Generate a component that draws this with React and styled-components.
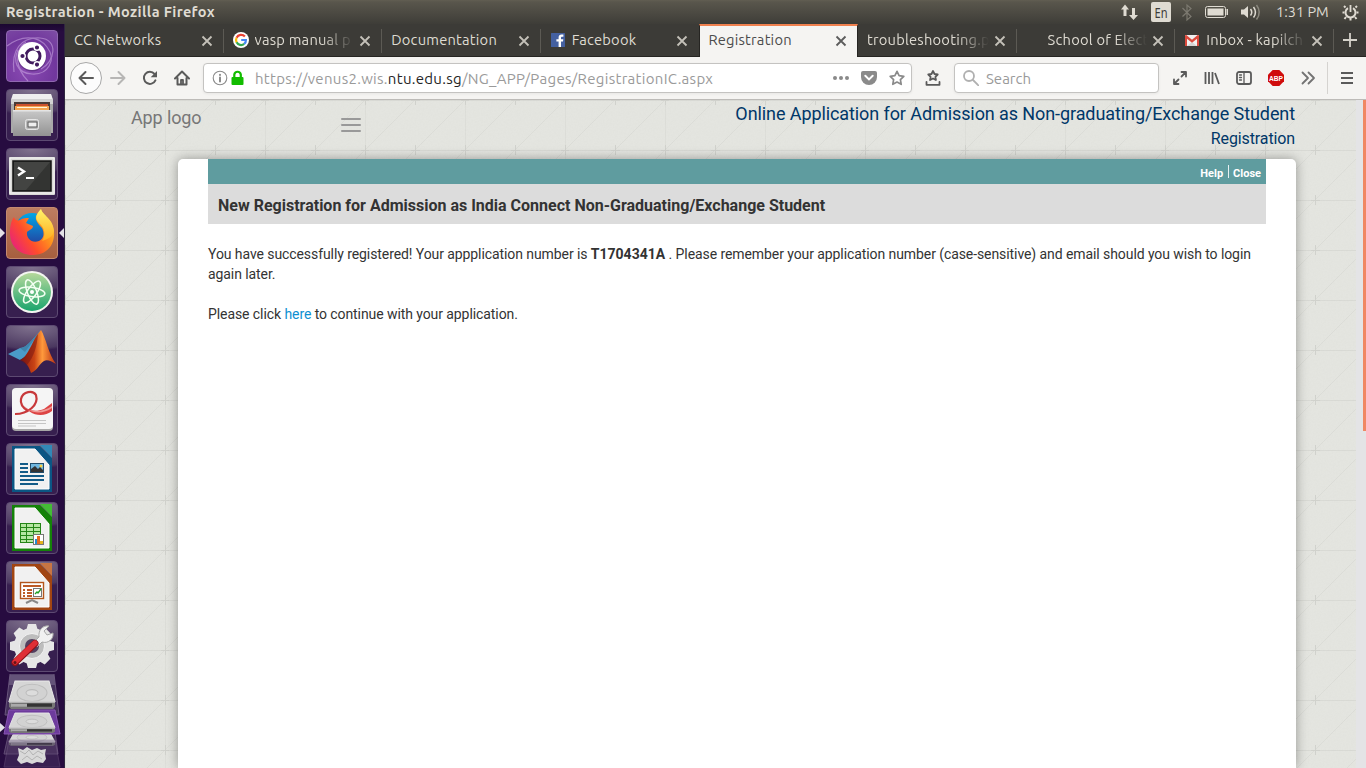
import React from 'react';
import styled, { createGlobalStyle, css } from 'styled-components';

const Global = createGlobalStyle`
  * { box-sizing: border-box; }
  html, body { margin: 0; height: 100%; overflow: hidden; }
  body { font-family: Roboto, "Liberation Sans", sans-serif; }
  svg { display: block; flex: none; }
`;
const uiFont = css`font-family: Ubuntu, "Noto Sans", "Open Sans", sans-serif;`;

const Desktop = styled.div`
  width: 1366px; height: 768px; display: flex; flex-direction: column; overflow: hidden;
`;
const TopPanel = styled.header`
  ${uiFont}
  height: 24px; flex: none; display: flex; align-items: center; justify-content: space-between;
  padding: 0 7px 0 6px; color: #dfdbd2;
  background: linear-gradient(#625e52 0, #59564c 2px, #3e3d38 24px);
`;
const WindowTitle = styled.div`
  font-size: 14.5px; font-weight: 700; line-height: 24px; white-space: nowrap; letter-spacing: 0.38px;
`;
const Indicators = styled.div`display: flex; align-items: center; height: 24px;`;
const Clock = styled.span`font-size: 14.5px; line-height: 24px; width: 53px; margin: 0 13px 0 0; white-space: nowrap; letter-spacing: 0;`;
const Body = styled.div`flex: 1; min-height: 0; display: flex;`;

const Launcher = styled.nav`
  width: 65px; flex: none; display: flex; flex-direction: column; gap: 7px; padding-top: 6px;
  background: linear-gradient(#1b0730 0, #270c40 8px); border-right: 1px solid #2f2640;
`;
const Tile = styled.div`
  position: relative; width: 52px; height: 52px; margin-left: 6px; flex: none;
  border-radius: 4px; border: 1px solid ${p => p.$edge || '#5d4a72'};
  background: ${p => p.$bg || 'radial-gradient(ellipse 60px 25px at 50% 0, #81738f 0, #4b3860 90%, transparent), #371f4f'};
  & > svg { margin: -1px; }
`;
const Marker = styled.span`
  position: absolute; top: 20px; width: 0; height: 0; border: 5px solid transparent;
  ${p => p.$side === 'left' ? 'left: -7px; border-left-color: #e4e1e7; border-right-width: 0;' : 'right: -7px; border-right-color: #e4e1e7; border-left-width: 0;'}
`;
const DiskStack = styled.div`margin-top: -5px; height: 94px;`;

const Browser = styled.main`flex: 1; min-width: 0; display: flex; flex-direction: column;`;
const TabStrip = styled.div`
  ${uiFont}
  height: 33px; flex: none; display: flex; background: #3c3b37; border-bottom: 1px solid #262522;
`;
const Tab = styled.div`
  position: relative; width: 158.6px; height: ${p => p.$active ? 33 : 32}px; flex: none; display: flex; align-items: center;
  padding: 0 8px 0 9px; color: ${p => p.$active ? '#4c4c4c' : '#dfdbd2'};
  ${p => p.$active && 'background: #f5f4f2; border-top: 2px solid #f0814f; border-left: 1px solid #262522; padding-bottom: 3px; padding-left: 8px; margin-bottom: -1px;'}
  border-right: 1px solid ${p => p.$active ? '#262522' : 'transparent'};
  ${p => p.$sep && '&::after { content: ""; position: absolute; right: -1px; top: 5px; width: 1px; height: 24px; background: #5c5a54; }'}
`;
const TabIcon = styled.span`width: 16px; height: 16px; margin-right: 6px; flex: none;`;
const TabLabel = styled.span`
  flex: 1; overflow: hidden; white-space: nowrap; font-size: 14.7px; line-height: 22px; letter-spacing: 0.22px;
  ${p => p.$fade && 'mask-image: linear-gradient(to right, #000 calc(100% - 32px), transparent);'}
`;
const Close = styled.span`margin: 2px 0 0 3px;`;
const NewTab = styled.div`flex: 1; display: flex; align-items: center; justify-content: center;`;

const Toolbar = styled.div`
  ${uiFont}
  height: 43px; flex: none; display: flex; align-items: center; padding-left: 5px;
  background: #f5f4f2; border-bottom: 1px solid #bdbbb8;
`;
const ToolButton = styled.span`
  width: 32px; height: 32px; flex: none; display: flex; align-items: center; justify-content: center;
  ${p => p.$round && 'border: 1px solid #a8a8a8; border-radius: 50%; background: #fcfcfc;'}
`;
const Field = styled.div`
  width: ${p => p.$w}px; height: 30px; margin: 0 5px; flex: none; display: flex; align-items: center;
  background: #fff; border: 1px solid #c4c3c1; border-radius: 4px; box-shadow: 0 1px 3px rgba(0,0,0,.06);
  padding: 0 ${p => p.$pr || 0}px 0 ${p => p.$pl}px;
`;
const Url = styled.span`
  flex: 1; font-size: 15px; color: #9a9a9a; white-space: nowrap; margin-left: ${p => p.$ml || 9}px; letter-spacing: ${p => p.$ls || 0}px;
  b { font-weight: 400; color: #252525; }
`;
const FieldIcons = styled.span`display: flex; gap: 12px; align-items: center;`;
const ToolDivider = styled.span`width: 1px; height: 32px; background: #d5d3d0; margin: 0 3px;`;

const Viewport = styled.div`flex: 1; min-height: 0; display: flex; background: #e4e4e6;`;
const Page = styled.div`
  position: relative; z-index: 0; width: 1291px; flex: none; overflow: hidden; display: flex; flex-direction: column; background: #e4e5e0;
`;
const Texture = styled.svg`position: absolute; inset: 0; z-index: -1;`;
const ScrollTrack = styled.div`flex: 1; display: flex; justify-content: flex-end;`;
const ScrollThumb = styled.div`width: 3px; height: 331px; background: #f08763;`;
const PageHeader = styled.div`height: 59px; flex: none; display: flex; padding: 0 61px 0 66px;`;
const Logo = styled.div`font-size: 18px; line-height: 36px; color: #777; width: 210px; letter-spacing: -0.12px;`;
const Menu = styled.div`
  width: 20px; padding-top: 18px; display: flex; flex-direction: column; gap: 4px;
  i { height: 2px; border-radius: 1px; background: #999; }
`;
const Heading = styled.div`
  margin-left: auto; text-align: right; color: #003768; white-space: nowrap;
`;
const HeadTitle = styled.div`font-size: 18px; line-height: 28px; letter-spacing: -0.09px;`;
const HeadSub = styled.div`font-size: 16px; line-height: 22px; letter-spacing: -0.12px;`;
const Card = styled.section`
  width: 1118px; flex: 1; margin-left: 113px; padding: 0 30px; background: #fff; border-radius: 5px 5px 0 0;
  box-shadow: 0 0 12px rgba(0,0,0,.35);
`;
const ActionBar = styled.div`
  height: 25px; background: #5f9c9f; display: flex; align-items: center; justify-content: flex-end;
  padding: 3px 5px 0 0; color: #fff; font-size: 11px; font-weight: 700;
  i { width: 1px; height: 13px; background: #fff; opacity: .85; margin: -4px 4px 0 5px; }
`;
const CardTitle = styled.h1`
  margin: 0; height: 40px; padding: 2px 10px 0; background: #dcdcdc; color: #333; font-size: 16px; font-weight: 700; line-height: 40px; white-space: nowrap;
`;
const Message = styled.p`
  margin: 20px 0 0; font-size: 14px; line-height: 20px; color: #333; letter-spacing: -0.08px;
  a { color: #0e90d2; }
  b { letter-spacing: 0; }
`;

const CloseX = ({ c = '#c4c1b9' }) => <Close><svg width="16" height="16" viewBox="0 0 16 16"><path d="M3.5 3.5l9 9m0-9l-9 9" stroke={c} strokeWidth="1.8" /></svg></Close>;
const Ic = ({ children, c = '#5a5a5a', w = 2, s = 16 }) => <svg width={s} height={s} viewBox="0 0 16 16" fill="none" stroke={c} strokeWidth={w} strokeLinecap="round" strokeLinejoin="round">{children}</svg>;
const star = 'M8 1.3l2.1 4.3 4.7.7-3.4 3.3.8 4.7L8 12.1l-4.2 2.2.8-4.7L1.2 6.3l4.7-.7z';

const GoogleIcon = () => <svg width="16" height="16" viewBox="0 0 16 16"><circle cx="8" cy="8" r="8" fill="#fff" /><g fill="none" strokeWidth="2.2"><path d="M11.9 4.6A5 5 0 0 0 3.6 5.8" stroke="#ea4335" /><path d="M3.6 5.8a5 5 0 0 0 0 4.6" stroke="#fbbc05" /><path d="M3.6 10.3a5 5 0 0 0 7.6 1.6" stroke="#34a853" /><path d="M11.2 11.9A4.8 4.8 0 0 0 12.9 8H8.2" stroke="#4285f4" /></g></svg>;
const FacebookIcon = () => <svg width="16" height="16" viewBox="0 0 16 16"><rect x="1" y="1" width="14" height="14" rx=".5" fill="#4460a0" /><path d="M8.6 15V9.6H6.4V7.2h2.2V5.6c0-2 1.1-3.1 3-3.1h1.8v2.2h-1.2c-.9 0-1.2.4-1.2 1.2v1.3h2.3l-.3 2.4h-2V15z" fill="#fff" /></svg>;
const MailIcon = () => <svg width="16" height="16" viewBox="0 0 16 16"><path d="M1 3h14v11H1z" fill="#f1f1f1" /><path d="M3 14l5-4 5 4z" fill="#d5d5d5" /><path d="M1 3.3v10.7h2V6.8l5 4 5-4V14h2V3.3L13.7 3 8 7.7 2.3 3z" fill="#dc4a3d" /></svg>;

const tabs = [
  { label: 'CC Networks', sep: 1 },
  { label: 'vasp manual p', icon: <GoogleIcon />, sep: 1, fade: 1 },
  { label: 'Documentation', sep: 1 },
  { label: 'Facebook', icon: <FacebookIcon /> },
  { label: 'Registration', active: 1 },
  { label: 'troubleshooting.p', sep: 1, fade: 1 },
  { label: 'School of Elect', icon: <></>, sep: 1, fade: 1 },
  { label: 'Inbox - kapilch', icon: <MailIcon />, sep: 1, fade: 1 },
];

const Sv = ({ children }) => <svg width="52" height="52" viewBox="0 0 52 52">{children}</svg>;
const UbuntuLogo = () => <Sv>
  <g fill="none" stroke="#d5b5ea" strokeWidth="1.2" opacity=".5"><path d="M8 42C5 20 15 7 34 8s15 24 1 31" /><path d="M1 16c13-10 30-12 40 1s1 28-15 27S7 30 12 20" /><path d="M22 51C9 38 8 20 20 12" /></g>
  <circle cx="26" cy="27" r="14.4" fill="#30104b" opacity=".35" /><circle cx="26" cy="26" r="14" fill="#fff" />
  <circle cx="27" cy="26" r="7" fill="none" stroke="#411b5e" strokeWidth="3" />
  <g stroke="#fff" strokeWidth="1.4" fill="#411b5e"><circle cx="16.5" cy="26" r="2.8" /><circle cx="31" cy="17.5" r="2.8" /><circle cx="31" cy="34.6" r="2.8" /></g>
</Sv>;
const Files = () => <Sv>
  <path d="M7 5h38l2 6v33H5V11z" fill="#a9a9a9" /><path d="M7 5h38l2 6H5z" fill="#efefef" /><path d="M5 10h42v5H5z" fill="#d2d2d2" />
  <path d="M8 13h36v9H8z" fill="#4b3a36" /><path d="M10 15h32v2H10z" fill="#cc512c" /><path d="M9 17h34v4H9z" fill="#f3a34f" /><path d="M11 18h30v1H11z" fill="#fff3da" />
  <path d="M7 21h38v26H7z" fill="url(#fl)" /><path d="M7 21h38v1.5H7z" fill="#e4e4e4" />
  <rect x="19.500" y="30.500" width="13" height="10" rx="2" fill="#bbb" stroke="#e6e6e6" /><rect x="22" y="33" width="9" height="5" fill="#eee" stroke="#555" />
  <defs><linearGradient id="fl" x2="0" y2="1"><stop stopColor="#c9c9c9" /><stop offset="1" stopColor="#929292" /></linearGradient></defs>
</Sv>;
const Terminal = () => <Sv>
  <rect x="3" y="9" width="46" height="38" rx="1" fill="#d9d9d6" /><rect x="4" y="10" width="44" height="35" fill="none" stroke="#f5f5f5" />
  <rect x="7" y="13" width="38" height="30" fill="#333432" stroke="#151515" strokeWidth="1.5" /><path d="M8 14h36L20 42H8z" fill="#4a4b49" opacity=".7" />
  <path d="M12 19.500l6 4-6 4" fill="none" stroke="#fff" strokeWidth="2.4" /><path d="M20 30h8" stroke="#fff" strokeWidth="2" />
</Sv>;
const Firefox = () => <Sv>
  <defs>
    <linearGradient id="ff" x1="1" y1=".1" x2="0" y2=".8"><stop stopColor="#ffe63c" /><stop offset=".3" stopColor="#ff9b1c" /><stop offset=".65" stopColor="#ff4c2c" /><stop offset="1" stopColor="#e61f80" /></linearGradient>
    <linearGradient id="fb" x1="0" y1="0" x2="0" y2="1"><stop stopColor="#00a7e8" /><stop offset="1" stopColor="#263b9a" /></linearGradient>
    <linearGradient id="fy" x2="0" y2="1"><stop stopColor="#fff36a" /><stop offset="1" stopColor="#ffab1e" /></linearGradient>
  </defs>
  <circle cx="26" cy="23" r="17" fill="url(#fb)" />
  <path d="M8 10C9 13 11 14 14 13C17 11 20 11 23 11L20 16L27 19C27 22 23 23 21 25C20 31 26 37 33 34C39 31 38 25 36 21C32 17 29 13 30 9L35 2C36 8 44 11 47 20C51 33 44 48 27 48C12 48 4 38 4 26C4 19 5 14 8 10Z" fill="url(#ff)" />
  <path d="M35 2C29 8 29 12 33 16C39 21 40 28 36 34C42 32 47 30 48 24C47 11 37 9 35 2Z" fill="url(#fy)" />
</Sv>;
const Atom = () => <Sv>
  <circle cx="26" cy="26" r="21" fill="#f4f6f1" /><circle cx="26" cy="26" r="19" fill="url(#at)" />
  <defs><linearGradient id="at" x2="0" y2="1"><stop stopColor="#b5d89b" /><stop offset="1" stopColor="#1ba56d" /></linearGradient></defs>
  <g fill="none" stroke="#f3fff2" strokeWidth="1.5"><ellipse cx="26" cy="26" rx="13" ry="4.600" transform="rotate(8 26 26)" /><ellipse cx="26" cy="26" rx="13" ry="4.600" transform="rotate(68 26 26)" /><ellipse cx="26" cy="26" rx="13" ry="4.600" transform="rotate(126 26 26)" /></g><circle cx="26" cy="26" r="2" fill="#fff" />
</Sv>;
const Matlab = () => <Sv>
  <defs><linearGradient id="ml"><stop stopColor="#8c160c" /><stop offset=".4" stopColor="#c94415" /><stop offset=".62" stopColor="#ff9a3c" /><stop offset="1" stopColor="#b72f12" /></linearGradient></defs>
  <path d="M2 29l12-6c5 0 8-4 12-8L35 5c-5 10-8 18-15 26l-6 4z" fill="#4a9bc9" /><path d="M14 23c5 0 8-4 12-8L35 5 19 27z" fill="#3f84ad" />
  <path d="M14 35c8-2 13-22 21-30 5 8 7 23 15 34-5-3-9-5-12-3-5 3-6 9-13 12-2-6-5-12-11-13z" fill="url(#ml)" /><path d="M14 35c8-2 13-20 18-26-1 12-4 23-11 31z" fill="#741411" opacity=".5" />
</Sv>;
const Reader = () => <Sv>
  <rect x="6" y="5" width="41" height="42" rx="4" fill="#a7a7a7" /><rect x="6" y="4" width="41" height="41" rx="4" fill="#f5f5f5" />
  <path d="M9 30C22 30 33 21 30 11c-3-5-13-4-15 4-1 5 2 9 7 12" fill="none" stroke="#c8393b" strokeWidth="2.200" />
  <path d="M16 18c3 8 12 11 22 7l8-6v8c-9 7-24 5-30-9z" fill="#dd4444" /><path d="M22 26c8 2 17 1 24-4v2c-7 5-16 6-24 2z" fill="#f09a96" />
  <path d="M12 36.500h28M12 39.500h28M12 42h18" stroke="#c5c5c5" />
</Sv>;
const Office = ({ color, light, children }) => <Sv>
  <path d="M6 3h26l14 15v31H6z" fill={color} /><path d="M9 6h20l14 16v24H9z" fill="#f1f1f1" stroke="#fff" /><path d="M29 3L46 20v-5L34 3z" fill={color} /><path d="M34 2h12v13z" fill={light} />{children}
</Sv>;
const Writer = () => <Office color="#0b5684" light="#3188b7"><path d="M14 21h8M14 25h8M14 29h8M14 33h24M14 37h24M14 41h18" stroke="#125b88" strokeWidth="2" /><rect x="24.500" y="20.500" width="13" height="9" fill="#6fb6df" stroke="#214c6b" /><circle cx="35" cy="23" r="1.500" fill="#f9d040" /><path d="M25 29v-3l4-3 3 3 2-2 3 3v2z" fill="#333" /></Office>;
const Calc = () => <Office color="#148209" light="#43bd35"><rect x="14" y="21" width="21" height="20" fill="#b5e6a2" /><path d="M14.500 21v20M20.500 21v20M27.500 21v20M34.500 21v20M14 21.500h21M14 25.500h21M14 29.500h21M14 33.500h21M14 37.500h21M14 40.500h21" stroke="#248517" /><rect x="27.500" y="32.500" width="10" height="10" fill="#fff" stroke="#777" /><path d="M29 37h2v5h-2z" fill="#268bd2" /><path d="M31 34h3v8h-3z" fill="#e66a21" /><path d="M34 39h3v3h-3z" fill="#e5b41d" /></Office>;
const Impress = () => <Office color="#a14512" light="#c87543"><rect x="14.500" y="21.500" width="23" height="16" fill="#fff" stroke="#b3551c" strokeWidth="1.400" /><path d="M17 25h18M17 29h2M17 32h2M17 35h2M21 29h5M21 32h5M21 35h5" stroke="#bd5b27" strokeWidth="2" /><rect x="27.500" y="27.500" width="8" height="8" fill="#fff" stroke="#777" /><path d="M29 33l2-2 1 1 3-4" fill="none" stroke="#1fa025" strokeWidth="1.300" /><path d="M20 42l6-3 6 3" fill="none" stroke="#888" strokeWidth="2" /></Office>;
const Settings = () => <Sv>
  <g fill="#e6e6e6">{[0, 45, 90, 135].map(a => <path key={a} d="M22 4h8l2 7v30l-2 7h-8l-2-7V11z" transform={`rotate(${a} 26 26)`} />)}<circle cx="26" cy="26" r="18" /></g><circle cx="26" cy="26" r="12.500" fill="#bdbdbd" stroke="#f4f4f4" /><circle cx="26" cy="26" r="7" fill="#53405f" />
  <path d="M28 22l5-5c-1-7 4-12 10-11l-5 5 3 4 6-2c1 6-5 11-11 9l-5 5z" fill="#f1f1f1" stroke="#a9a9a9" />
  <path d="M9 42.500L29 23.500" stroke="#8c1017" strokeWidth="7" strokeLinecap="round" /><path d="M9 42L29 23" stroke="#df2e35" strokeWidth="5.400" strokeLinecap="round" /><circle cx="9" cy="42.500" r="1.500" fill="#641117" />
</Sv>;
const Disk = ({ y, h = 24 }) => <g transform={`translate(0 ${y}) scale(1 ${h / 26})`}><path d="M15 0h34l6 19H9z" fill="#d6d6d6" stroke="#e9e9e9" /><ellipse cx="32" cy="11" rx="15" ry="8" fill="#d2d2d2" stroke="#bdbdbd" /><ellipse cx="32" cy="11" rx="6" ry="3" fill="#dcdcdc" stroke="#bbb" /><path d="M9 19h46v5l-2 2H11l-2-2z" fill="#777" /><path d="M12 21h40v3H12z" fill="#333" /><path d="M9 19h46v1H9z" fill="#eee" /><path d="M11 21h16v3H11z" fill="#aaa" /></g>;
const Stack = () => <svg width="64" height="94" viewBox="0 0 64 94">
  <path d="M10 0h44l5 41H5z" fill="#44305b" stroke="#69567c" /><path d="M10 1h44l1 10H9z" fill="#77678a" opacity=".65" /><Disk y="7" h={28} />
  <path d="M9 58h46l3 22H4z" fill="#422a58" stroke="#614b74" /><Disk y="57" h={15} />
  <path d="M9 36h46l5 24H4z" fill="#6d3b9c" stroke="#8854b2" /><Disk y="39" h={20} />
  <path d="M9 66h46l5 27H4z" fill="#56406b" opacity=".4" stroke="#80688f" />
  <path d="M18 74l5 2 4-3 5 3 5-2 4 2 5-1-1 5 1 5-3 4-6-1-5 2-5-2-6 2-4-4 2-5z" fill="#d9d9d9" /><path d="M20 77l5 3 4-4 4 5 5-4 5 3M22 86l5-4 5 4 5-4 5 3" fill="none" stroke="#b4b4b4" />
  <path d="M0 49l5 4.500-5 4.500z" fill="#e4e1e7" />
</svg>;

const apps = [
  { I: UbuntuLogo, bg: 'radial-gradient(circle at 40% 75%, #8b4bb4, #71379d 60%, #7e4da5)', edge: '#9068b1' },
  { I: Files }, { I: Terminal },
  { I: Firefox, bg: 'linear-gradient(#bd7d61, #a75f3f)', edge: '#c48a70', running: 1 },
  { I: Atom }, { I: Matlab }, { I: Reader }, { I: Writer }, { I: Calc }, { I: Impress }, { I: Settings },
];

const SystemTray = () => <Indicators>
  <svg width="158" height="24" viewBox="0 0 158 24" fill="#dfdbd2">
    <path d="M7 4.500l4 5H8.500V16h-3V9.500H3zM15.500 20l-4.500-5h3V8h3v7h3z" />
    <rect x="33" y="2" width="20" height="20" rx="2" />
    <text x="43" y="17.500" textAnchor="middle" fontFamily="Noto Sans, sans-serif" fontSize="14" fill="#3c3b37" textLength="13" lengthAdjust="spacingAndGlyphs">En</text>
    <path d="M64.500 8l8.500 8.500-4 3.500V5l4 3.500-8.500 8" fill="none" stroke="#7c7970" strokeWidth="1.200" />
    <rect x="87.500" y="6.500" width="20" height="11" rx="2" fill="none" stroke="#dfdbd2" /><rect x="89.500" y="8.500" width="16" height="7" /><path d="M108.500 9h1.500v6h-1.500z" />
    <path d="M123 9.500h3l4-3.500v12l-4-3.500h-3z" /><path d="M132.500 9q2.500 3.300 0 6.500M135.500 7q4 5.300 0 10.500" fill="none" stroke="#dfdbd2" strokeWidth="1.500" /><path d="M138.500 5q5.500 7.300 0 14.500" fill="none" stroke="#8a877d" strokeWidth="1.500" />
  </svg>
  <Clock>1:31 PM</Clock>
  <svg width="17" height="17" viewBox="0 0 17 17" fill="none" stroke="#dfdbd2"><path d="M6 4.200a5 5 0 1 0 5 0" strokeWidth="2" /><path d="M8.500 1v7" strokeWidth="1.800" /><path d="M3.500 3.500L2 2M13.500 3.500L15 2M2.500 8.500H.5M14.500 8.500h2M4 13l-1.500 2M13 13l1.500 2M8.500 14v2.500" strokeWidth="2" /></svg>
</Indicators>;

const Background = () => <Texture width="1291" height="668">
  <defs>
    <pattern id="grid" width="100" height="50" patternUnits="userSpaceOnUse">
      <path d="M0 .5h100" stroke="#d9dad5" /><path d="M.5 0v50" stroke="#dddeD9" />
      <path d="M0 50L50 0M50 50L100 0" stroke="#dcddd8" />
      <path d="M.5 0v5M.5 45v5M50.500 0v5M50.500 45v5M0 .5h4M46 .5h9M96 .5h4" stroke="#d1d2cd" />
    </pattern>
    <filter id="paper"><feTurbulence type="fractalNoise" baseFrequency=".6" numOctaves="2" /><feColorMatrix values="0 0 0 0 .4  0 0 0 0 .4  0 0 0 0 .35  .12 0 0 0 -.03" /></filter>
  </defs>
  <rect width="1291" height="668" fill="url(#grid)" /><rect width="1291" height="668" filter="url(#paper)" opacity=".45" />
</Texture>;

export default function App() {
  return <Desktop>
    <Global />
    <TopPanel><WindowTitle>Registration - Mozilla Firefox</WindowTitle><SystemTray /></TopPanel>
    <Body>
      <Launcher>
        {apps.map(({ I, bg, edge, running }, i) => <Tile key={i} $bg={bg} $edge={edge}><I />{running && <><Marker $side="left" /><Marker $side="right" /></>}</Tile>)}
        <DiskStack><Stack /></DiskStack>
      </Launcher>
      <Browser>
        <TabStrip>
          {tabs.map(t => <Tab key={t.label} $active={t.active} $sep={t.sep}>{t.icon && <TabIcon>{t.icon}</TabIcon>}<TabLabel $fade={t.fade}>{t.label}</TabLabel><CloseX c={t.active ? '#5c5c5c' : undefined} /></Tab>)}
          <NewTab><svg width="16" height="16" viewBox="0 0 16 16"><path d="M8 1v14M1 8h14" stroke="#d5d2ca" strokeWidth="1.800" /></svg></NewTab>
        </TabStrip>
        <Toolbar>
          <ToolButton $round><Ic><path d="M15 8H1.500M7.500 2l-6 6 6 6" /></Ic></ToolButton>
          <ToolButton><Ic c="#b7b6b5"><path d="M1 8h13.500M8.500 2l6 6-6 6" /></Ic></ToolButton>
          <ToolButton><Ic><path d="M13.400 10.300A6 6 0 1 1 12.500 4" /><path d="M15 1v6.300H8.700z" fill="#5a5a5a" stroke="none" /></Ic></ToolButton>
          <ToolButton><Ic><path d="M1 8.500l7-7 7 7M3.500 8v6.500h9V8" /><path d="M7 14v-4h2v4" strokeWidth="1.800" /></Ic></ToolButton>
          <Field $w={709} $pl={8} $pr={6}>
            <Ic c="#8a8a8a" w={1.1}><circle cx="8" cy="8" r="6.800" /><path d="M8 7.500v4M8 4.700v.2" strokeWidth="2" /></Ic>
            <svg width="18" height="16" viewBox="-1 0 18 16"><path d="M5.300 8V4.500a3.300 3.300 0 0 1 6.500 0V8" fill="none" stroke="#12bc00" strokeWidth="2.200" /><rect x="2.500" y="7" width="12" height="8" rx="1" fill="#12bc00" /></svg>
            <Url $ls={0.3}>https://venus2.wis.<b>ntu.edu.sg</b>/NG_APP/Pages/RegistrationIC.aspx</Url>
            <FieldIcons>
              <svg width="16" height="16" viewBox="0 0 16 16" fill="#8a8a8a"><circle cx="2" cy="8" r="2" /><circle cx="8" cy="8" r="2" /><circle cx="14" cy="8" r="2" /></svg>
              <svg width="16" height="16" viewBox="0 0 16 16"><path d="M2 1h12q2 0 2 2v4a8 8 0 0 1-16 0V3q0-2 2-2z" fill="#8a8a8a" /><path d="M4.300 5.800L8 9.400l3.700-3.600" fill="none" stroke="#fff" strokeWidth="2" strokeLinecap="round" /></svg>
              <Ic c="#8a8a8a" w={1.7}><path d={star} /></Ic>
            </FieldIcons>
          </Field>
          <ToolButton><Ic w={1.8}><path d="M8 1l1.500 3 3.200.5-2.300 2.300.5 3.200L8 8.500 5.100 10l.5-3.200-2.300-2.300L6.500 4z" /><path d="M1.500 12v2.800h13V12" /></Ic></ToolButton>
          <Field $w={205} $pl={8}>
            <Ic c="#b0b0b0" w={1.8}><circle cx="6" cy="6" r="5" /><path d="M10 10l5.500 5.500" /></Ic><Url $ml={7}>Search</Url>
          </Field>
          <ToolButton><Ic w={1.8}><path d="M9.500 6.500L14 2M9.500 2H14v4.500M6.500 9.500L2 14M2 9.500V14h4.500" /></Ic></ToolButton>
          <ToolButton><Ic w={1.8}><path d="M1.500 2v12M5 2v12M8.500 2v12M11 3l4 11" strokeLinecap="butt" /></Ic></ToolButton>
          <ToolButton><Ic w={1.8}><rect x="1" y="2" width="14" height="12" rx="2" /><path d="M8 2v12M3.500 5h2M3.500 7.500h2M3.500 10h2" strokeWidth="1.300" /></Ic></ToolButton>
          <ToolButton><svg width="16" height="16" viewBox="0 0 16 16"><path d="M4.700 0h6.600L16 4.700v6.600L11.300 16H4.700L0 11.300V4.700z" fill="#d00c0c" /><text x="8" y="10.600" fontFamily="Liberation Sans, sans-serif" fontWeight="700" fontSize="7.5" fill="#fff" textAnchor="middle" textLength="14" lengthAdjust="spacingAndGlyphs">ABP</text></svg></ToolButton>
          <ToolButton><Ic c="#737373" w={1.8}><path d="M2.500 2.500L8 8l-5.500 5.500M8.500 2.500L14 8l-5.500 5.500" /></Ic></ToolButton>
          <ToolDivider />
          <ToolButton><svg width="16" height="16" viewBox="0 0 16 16"><path d="M2 3h12M2 8h12M2 13h12" stroke="#5a5a5a" strokeWidth="2" /></svg></ToolButton>
        </Toolbar>
        <Viewport>
          <Page>
            <Background />
            <PageHeader>
              <Logo>App logo</Logo><Menu><i /><i /><i /></Menu>
              <Heading><HeadTitle>Online Application for Admission as Non-graduating/Exchange Student</HeadTitle><HeadSub>Registration</HeadSub></Heading>
            </PageHeader>
            <Card>
              <ActionBar><span>Help</span><i /><span>Close</span></ActionBar>
              <CardTitle>New Registration for Admission as India Connect Non-Graduating/Exchange Student</CardTitle>
              <Message>You have successfully registered! Your appplication number is <b>T1704341A</b> . Please remember your application number (case-sensitive) and email should you wish to login again later.</Message>
              <Message>Please click <a>here</a> to continue with your application.</Message>
            </Card>
          </Page>
          <ScrollTrack><ScrollThumb /></ScrollTrack>
        </Viewport>
      </Browser>
    </Body>
  </Desktop>;
}
